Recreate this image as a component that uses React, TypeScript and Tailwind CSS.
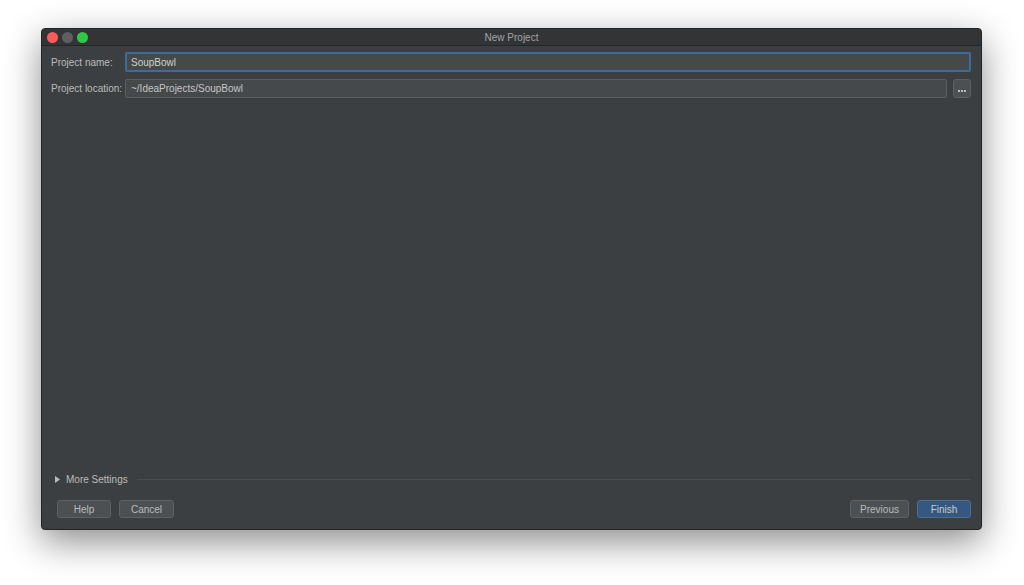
import React from 'react';

const font = { fontFamily: '"Liberation Sans", Arial, sans-serif' };

const Btn: React.FC<{ label: string; primary?: boolean; w: string }> = ({ label, primary, w }) => (
  <div
    className={`${w} h-[18px] flex items-center justify-center rounded-[3px] border text-[10px] ${
      primary ? 'bg-[#365880] border-[#4b6f93] text-[#c8ccd0]' : 'bg-[#4c5052] border-[#5e6164] text-[#bbbbbb]'
    }`}
  >
    {label}
  </div>
);

export default function App() {
  return (
    <div className="w-[1024px] h-[585px] bg-white pl-[41px] pt-[28px]" style={font}>
      <div className="w-[941px] h-[502px] flex flex-col bg-[#3c3f41] rounded-[4px] border border-[#232425] shadow-[0_12px_36px_rgba(0,0,0,0.45)] overflow-hidden">
        {/* title bar */}
        <div className="relative h-[17px] flex items-center bg-[#323435] border-b border-[#242526]">
          <div className="flex items-center gap-[4px] pl-[5px]">
            <span className="w-[11px] h-[11px] rounded-full bg-[#fc5b57]" />
            <span className="w-[11px] h-[11px] rounded-full bg-[#5d5f60]" />
            <span className="w-[11px] h-[11px] rounded-full bg-[#33c748]" />
          </div>
          <div className="absolute inset-0 flex items-center justify-center text-[10px] text-[#a3a5a6]">
            New Project
          </div>
        </div>

        {/* form */}
        <div className="flex-1 flex flex-col pl-[9px] pr-[10px] pt-[6px]">
          <div className="flex items-center h-[20px]">
            <div className="w-[74px] whitespace-nowrap text-[10px] text-[#bbbbbb]">Project name:</div>
            <div className="flex-1 h-[20px] flex items-center px-[4px] bg-[#45494a] border-2 border-[#3d6b9c] rounded-[2px] text-[10px] text-[#d0d0d0]">
              SoupBowl
            </div>
          </div>
          <div className="flex items-center h-[19px] mt-[7px]">
            <div className="w-[74px] whitespace-nowrap text-[10px] text-[#bbbbbb]">Project location:</div>
            <div className="flex-1 h-[19px] flex items-center px-[5px] bg-[#45494a] border border-[#5b5e60] rounded-[2px] text-[10px] text-[#c5c5c5]">
              ~/IdeaProjects/SoupBowl
            </div>
            <div className="ml-[6px] w-[18px] h-[19px] flex items-center justify-center gap-[1px] bg-[#4c5052] border border-[#5e6164] rounded-[3px]">
              <span className="w-[2px] h-[2px] bg-[#bbbbbb] mt-[4px]" />
              <span className="w-[2px] h-[2px] bg-[#bbbbbb] mt-[4px]" />
              <span className="w-[2px] h-[2px] bg-[#bbbbbb] mt-[4px]" />
            </div>
          </div>

          <div className="flex-1" />

          {/* more settings */}
          <div className="flex items-center h-[14px] pl-[4px]">
            <svg width="5" height="7" viewBox="0 0 5 7" className="mr-[6px]">
              <path d="M0 0 L5 3.5 L0 7 Z" fill="#bbbbbb" />
            </svg>
            <span className="text-[10px] text-[#bbbbbb]">More Settings</span>
            <div className="flex-1 h-px bg-[#4a4d4f] ml-[9px]" />
          </div>

          {/* buttons */}
          <div className="flex items-center mt-[14px] mb-[11px] pl-[6px]">
            <Btn label="Help" w="w-[54px]" />
            <div className="w-[8px]" />
            <Btn label="Cancel" w="w-[55px]" />
            <div className="flex-1" />
            <Btn label="Previous" w="w-[59px]" />
            <div className="w-[8px]" />
            <Btn label="Finish" primary w="w-[54px]" />
          </div>
        </div>
      </div>
    </div>
  );
}
